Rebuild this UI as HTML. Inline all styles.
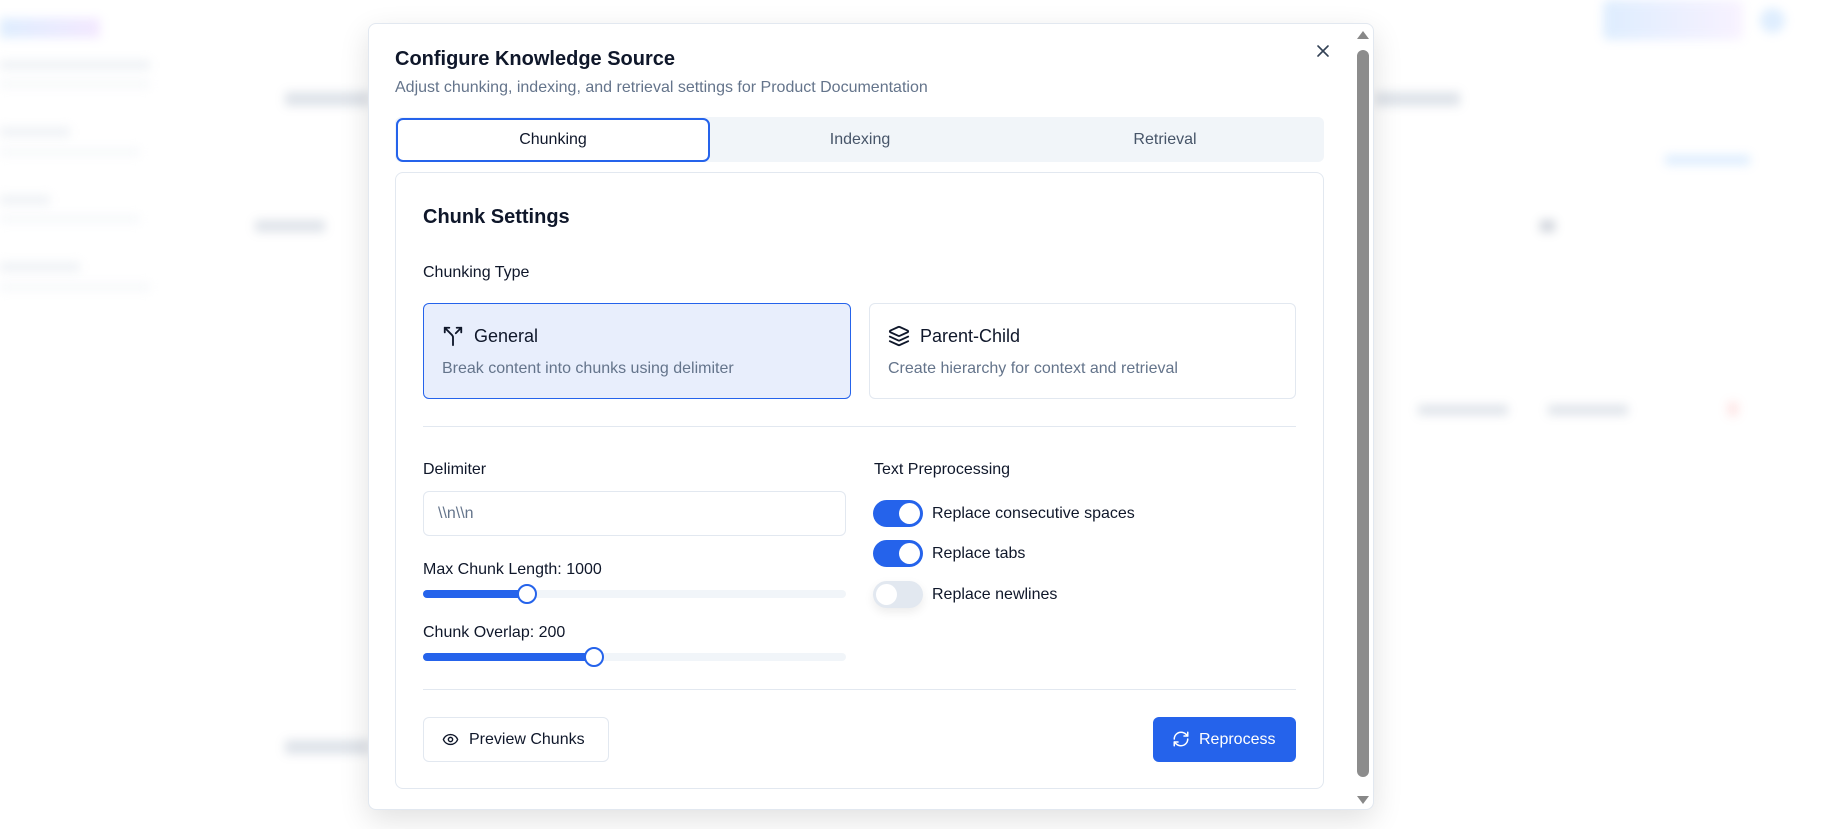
<!DOCTYPE html>
<html><head><meta charset="utf-8"><style>
*{box-sizing:border-box;margin:0;padding:0}
body{width:1822px;height:829px;overflow:hidden;background:#fff;font-family:"Liberation Sans",sans-serif;position:relative;color:#0f172a}
.bg{position:absolute;filter:blur(5px);opacity:.3}
.abs{position:absolute}
.modal{position:absolute;left:368px;top:23px;width:1006px;height:787px;background:#fff;border:1px solid #e2e8f0;border-radius:8px;box-shadow:0 10px 30px rgba(0,0,0,.12)}
.t{position:absolute;white-space:nowrap}
.toggle{position:absolute;left:873px;width:50px;height:27px;border-radius:14px;background:#2563eb}
.toggle i{position:absolute;top:3px;left:26px;width:21px;height:21px;border-radius:50%;background:#fff}
.toggle.off{background:#e2e8f0;box-shadow:0 4px 10px rgba(0,0,0,.08)}
.toggle.off i{left:3px}
.lab{font-size:16px;color:#0f172a}
</style></head><body>
<div class="bg" style="left:0;top:18px;width:100px;height:20px;background:linear-gradient(90deg,#93c5fd,#d8b4fe)"></div>
<div class="bg" style="left:1603px;top:0;width:140px;height:40px;border-radius:6px;background:linear-gradient(90deg,#93c5fd,#e9d5ff)"></div>
<div class="bg" style="left:1760px;top:8px;width:25px;height:25px;border-radius:50%;background:#93c5fd"></div>
<div class="bg" style="left:0;top:60px;width:150px;height:10px;background:#cbd5e1"></div>
<div class="bg" style="left:0;top:80px;width:150px;height:8px;background:#e2e8f0"></div>
<div class="bg" style="left:0;top:127px;width:70px;height:10px;background:#cbd5e1"></div>
<div class="bg" style="left:0;top:148px;width:140px;height:8px;background:#e2e8f0"></div>
<div class="bg" style="left:0;top:195px;width:50px;height:10px;background:#cbd5e1"></div>
<div class="bg" style="left:0;top:215px;width:140px;height:8px;background:#e2e8f0"></div>
<div class="bg" style="left:0;top:262px;width:80px;height:10px;background:#cbd5e1"></div>
<div class="bg" style="left:0;top:283px;width:150px;height:8px;background:#e2e8f0"></div>
<div class="bg" style="left:285px;top:92px;width:85px;height:14px;background:#94a3b8"></div>
<div class="bg" style="left:255px;top:220px;width:70px;height:12px;background:#94a3b8"></div>
<div class="bg" style="left:1375px;top:92px;width:85px;height:14px;background:#94a3b8"></div>
<div class="bg" style="left:1665px;top:155px;width:85px;height:10px;background:#93c5fd"></div>
<div class="bg" style="left:1540px;top:220px;width:15px;height:12px;background:#64748b"></div>
<div class="bg" style="left:1418px;top:405px;width:90px;height:10px;background:#94a3b8"></div>
<div class="bg" style="left:1548px;top:405px;width:80px;height:10px;background:#94a3b8"></div>
<div class="bg" style="left:1728px;top:402px;width:10px;height:14px;background:#fca5a5"></div>
<div class="bg" style="left:285px;top:740px;width:85px;height:14px;background:#94a3b8"></div>

<div class="modal"></div>
<svg class="abs" style="left:1316px;top:44px" width="14" height="14" viewBox="0 0 14 14"><path d="M2 2L12 12M12 2L2 12" stroke="#334155" stroke-width="1.6" stroke-linecap="round"/></svg>
<svg class="abs" style="left:1356px;top:30px" width="14" height="10"><path d="M1 9L7 1L13 9Z" fill="#888"/></svg>
<div class="abs" style="left:1357px;top:50px;width:12px;height:727px;border-radius:6px;background:#8c8c8c"></div>
<svg class="abs" style="left:1356px;top:795px" width="14" height="10"><path d="M1 1L7 9L13 1Z" fill="#888"/></svg>

<div class="t" style="left:395px;top:48px;font-size:20px;font-weight:bold;color:#0f172a">Configure Knowledge Source</div>
<div class="t" style="left:395px;top:79px;font-size:16px;color:#64748b">Adjust chunking, indexing, and retrieval settings for Product Documentation</div>

<div class="abs" style="left:395px;top:117px;width:929px;height:45px;background:#f1f5f9;border-radius:6px"></div>
<div class="abs" style="left:396px;top:118px;width:314px;height:44px;background:#fff;border:2px solid #2563eb;border-radius:7px"></div>
<div class="t" style="left:396px;width:314px;text-align:center;top:131px;font-size:16px;color:#0f172a">Chunking</div>
<div class="t" style="left:710px;width:300px;text-align:center;top:131px;font-size:16px;color:#475569">Indexing</div>
<div class="t" style="left:1015px;width:300px;text-align:center;top:131px;font-size:16px;color:#475569">Retrieval</div>

<div class="abs" style="left:395px;top:172px;width:929px;height:617px;border:1px solid #e2e8f0;border-radius:8px;background:#fff"></div>
<div class="t" style="left:423px;top:206px;font-size:20px;font-weight:bold">Chunk Settings</div>
<div class="t" style="left:423px;top:264px;font-size:16px">Chunking Type</div>

<div class="abs" style="left:423px;top:303px;width:428px;height:96px;background:#e8eefc;border:1px solid #2563eb;border-radius:6px"></div>
<svg class="abs" style="left:442px;top:325px" width="22" height="22" viewBox="0 0 24 24" fill="none" stroke="#0f172a" stroke-width="2" stroke-linecap="round" stroke-linejoin="round"><path d="M16 3h5v5"/><path d="M8 3H3v5"/><path d="M12 22v-8.3a4 4 0 0 0-1.172-2.872L3 3"/><path d="m15 9 6-6"/></svg>
<div class="t" style="left:474px;top:326px;font-size:18px">General</div>
<div class="t" style="left:442px;top:360px;font-size:16px;color:#64748b">Break content into chunks using delimiter</div>

<div class="abs" style="left:869px;top:303px;width:427px;height:96px;background:#fff;border:1px solid #e2e8f0;border-radius:6px"></div>
<svg class="abs" style="left:888px;top:325px" width="22" height="22" viewBox="0 0 24 24" fill="none" stroke="#0f172a" stroke-width="2" stroke-linecap="round" stroke-linejoin="round"><path d="m12.83 2.18a2 2 0 0 0-1.66 0L2.6 6.08a1 1 0 0 0 0 1.83l8.58 3.91a2 2 0 0 0 1.66 0l8.58-3.9a1 1 0 0 0 0-1.83Z"/><path d="m22 17.650-9.17 4.16a2 2 0 0 1-1.66 0L2 17.65"/><path d="m22 12.65-9.17 4.16a2 2 0 0 1-1.66 0L2 12.65"/></svg>
<div class="t" style="left:920px;top:326px;font-size:18px">Parent-Child</div>
<div class="t" style="left:888px;top:360px;font-size:16px;color:#64748b">Create hierarchy for context and retrieval</div>

<div class="abs" style="left:423px;top:426px;width:873px;height:1px;background:#e2e8f0"></div>

<div class="t" style="left:423px;top:461px;font-size:16px">Delimiter</div>
<div class="abs" style="left:423px;top:491px;width:423px;height:45px;border:1px solid #e2e8f0;border-radius:6px"></div>
<div class="t" style="left:438px;top:505px;font-size:16px;color:#64748b">\\n\\n</div>

<div class="t" style="left:423px;top:561px;font-size:16px">Max Chunk Length: 1000</div>
<div class="abs" style="left:423px;top:590px;width:423px;height:8px;border-radius:4px;background:#f1f5f9"></div>
<div class="abs" style="left:423px;top:590px;width:104px;height:8px;border-radius:4px;background:#2563eb"></div>
<div class="abs" style="left:517px;top:584px;width:20px;height:20px;border-radius:50%;background:#fff;border:2px solid #2563eb"></div>

<div class="t" style="left:423px;top:624px;font-size:16px">Chunk Overlap: 200</div>
<div class="abs" style="left:423px;top:653px;width:423px;height:8px;border-radius:4px;background:#f1f5f9"></div>
<div class="abs" style="left:423px;top:653px;width:171px;height:8px;border-radius:4px;background:#2563eb"></div>
<div class="abs" style="left:584px;top:647px;width:20px;height:20px;border-radius:50%;background:#fff;border:2px solid #2563eb"></div>

<div class="t" style="left:874px;top:461px;font-size:16px">Text Preprocessing</div>
<div class="toggle" style="top:500px"><i></i></div>
<div class="t lab" style="left:932px;top:505px">Replace consecutive spaces</div>
<div class="toggle" style="top:540px"><i></i></div>
<div class="t lab" style="left:932px;top:545px">Replace tabs</div>
<div class="toggle off" style="top:581px"><i></i></div>
<div class="t lab" style="left:932px;top:586px">Replace newlines</div>

<div class="abs" style="left:423px;top:689px;width:873px;height:1px;background:#e2e8f0"></div>

<div class="abs" style="left:423px;top:717px;width:186px;height:45px;border:1px solid #e2e8f0;border-radius:6px;background:#fff"></div>
<svg class="abs" style="left:442px;top:731px" width="17" height="17" viewBox="0 0 24 24" fill="none" stroke="#0f172a" stroke-width="2" stroke-linecap="round" stroke-linejoin="round"><path d="M2.06 12.35a1 1 0 0 1 0-.7 10.75 10.75 0 0 1 19.88 0 1 1 0 0 1 0 .7 10.75 10.75 0 0 1-19.88 0"/><circle cx="12" cy="12" r="3"/></svg>
<div class="t" style="left:469px;top:731px;font-size:16px">Preview Chunks</div>

<div class="abs" style="left:1153px;top:717px;width:143px;height:45px;border-radius:6px;background:#2563eb"></div>
<svg class="abs" style="left:1172px;top:730px" width="18" height="18" viewBox="0 0 24 24" fill="none" stroke="#fff" stroke-width="2" stroke-linecap="round" stroke-linejoin="round"><path d="M3 12a9 9 0 0 1 9-9 9.75 9.75 0 0 1 6.740 2.74L21 8"/><path d="M21 3v5h-5"/><path d="M21 12a9 9 0 0 1-9 9 9.75 9.75 0 0 1-6.74-2.74L3 16"/><path d="M8 16H3v5"/></svg>
<div class="t" style="left:1199px;top:731px;font-size:16px;color:#fff">Reprocess</div>
</body></html>
